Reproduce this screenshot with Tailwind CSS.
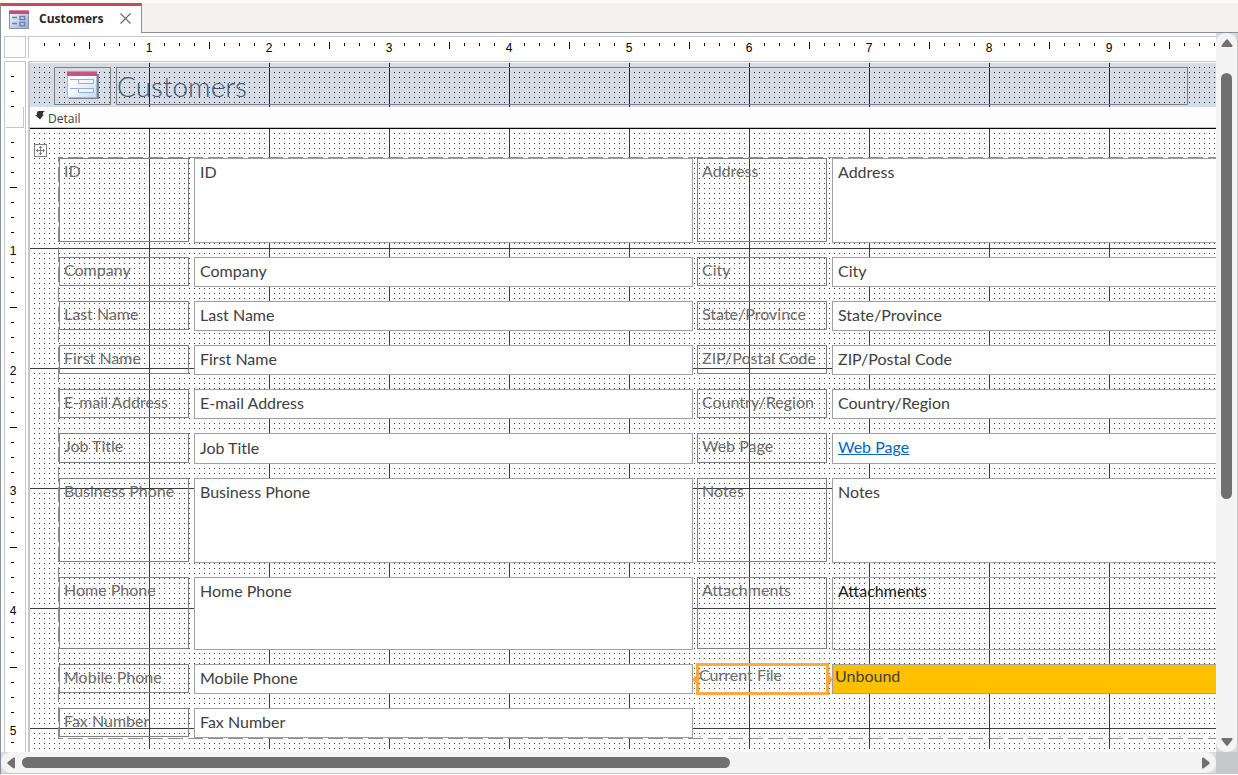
<!DOCTYPE html>
<html lang="en">
<head>
<meta charset="utf-8">
<title>Customers</title>
<script src="https://cdn.jsdelivr.net/npm/@tailwindcss/browser@4"></script>
</head>
<body class="h-screen overflow-hidden bg-[#fafafa] font-['Open_Sans','Noto_Sans',sans-serif] text-[#404040]">
<div class="flex h-full flex-col pt-[3px] pb-px">

  <!-- Document tabs -->
  <header class="flex h-[30px] shrink-0">
    <div class="flex w-[142px] items-center border-t-3 border-r border-l border-t-[#c0504d] border-r-[#8a9099] border-l-[#8a9099] bg-white pl-2">
      <svg class="shrink-0" width="20" height="19" viewBox="0 0 20 19" aria-hidden="true">
        <defs><linearGradient id="tabFill" x1="0" y1="0" x2="1" y2="1"><stop offset="0" stop-color="#fff"/><stop offset="1" stop-color="#8fa9d6"/></linearGradient></defs>
        <rect x=".5" y=".5" width="19" height="18" fill="url(#tabFill)" stroke="#8494b5"/>
        <path d="M0 0h20v4H0z" fill="#bd5277"/><path d="M0 0h20v1H0z" fill="#d48aa5"/>
        <path d="M3 7.500h5M3 13.500h5" stroke="#6c80a8" stroke-width="1.500"/>
        <path d="M11 6.500h4.500v3H11zM11 12.500h4.500v3H11z" fill="#dce7f8" stroke="#6c80a8" stroke-width="1.500"/>
      </svg>
      <span class="ml-2.5 pb-0.5 text-xs font-bold text-[#262626]">Customers</span>
      <button class="ml-4 flex size-3 items-center justify-center" aria-label="Close Customers">
        <svg class="mb-0.5" width="11" height="11" viewBox="0 0 11 11" fill="none" stroke="#666" stroke-width="1.100"><path d="M.5.5l10 10M10.500.5l-10 10"/></svg>
      </button>
    </div>
    <div class="flex-1 border-b border-[#8a9099] bg-[#f3f2f1]"></div>
  </header>

  <main class="grid min-h-0 flex-1 grid-cols-[28px_minmax(0,1fr)_22px] grid-rows-[28px_minmax(0,1fr)_22px] border-l border-[#8a9099] bg-white">

    <!-- Corner selector -->
    <div class="py-[3px] pl-[3px]"><button class="block h-[22px] w-[22px] border border-[#c6c6c6] bg-[#fdfdfd]" aria-label="Select form"></button></div>

    <!-- Horizontal ruler -->
    <div class="relative -ml-px mt-[3px] h-[22px] overflow-hidden border-t border-l border-[#c6c6c6]">
      <svg class="absolute inset-0 h-full w-full" aria-hidden="true">
        <defs><pattern id="hTicks" width="120" height="22" patternUnits="userSpaceOnUse"><path d="M15 6h1v3h-1zM30 6h1v3h-1zM45 6h1v3h-1zM60 5h1v7h-1zM75 6h1v3h-1zM90 6h1v3h-1zM105 6h1v3h-1z"/></pattern></defs>
        <rect width="100%" height="100%" fill="url(#hTicks)"/>
      </svg>
      <div class="relative flex pl-[60px] font-['Liberation_Sans',sans-serif] text-xs leading-[22px] text-black">
        <span class="w-[120px] shrink-0 text-center">1</span><span class="w-[120px] shrink-0 text-center">2</span><span class="w-[120px] shrink-0 text-center">3</span><span class="w-[120px] shrink-0 text-center">4</span><span class="w-[120px] shrink-0 text-center">5</span><span class="w-[120px] shrink-0 text-center">6</span><span class="w-[120px] shrink-0 text-center">7</span><span class="w-[120px] shrink-0 text-center">8</span><span class="w-[120px] shrink-0 text-center">9</span>
      </div>
    </div>

    <!-- Vertical scroll bar -->
    <div class="row-span-2 border-r border-[#c8c8c8] bg-[#dcdcdc]">
      <div class="flex h-full flex-col items-center rounded-[10px] bg-[#f4f4f4] py-[6px]">
        <button aria-label="Scroll up"><svg width="12" height="8" viewBox="0 0 12 8" fill="#707070"><path d="M5 .8Q6-.2 7 .8L11.500 6.500Q11.800 8 10.500 8h-9Q.2 8 .5 6.500z"/></svg></button>
        <div class="flex w-full flex-1 flex-col items-center pt-[26px]"><div class="h-[64%] w-[11px] rounded-full bg-[#707070]"></div></div>
        <button aria-label="Scroll down"><svg width="12" height="8" viewBox="0 0 12 8" fill="#707070"><path d="M5 7.200Q6 8.200 7 7.200L11.500 1.500Q11.800 0 10.500 0h-9Q.2 0 .5 1.500z"/></svg></button>
      </div>
    </div>

    <!-- Vertical ruler -->
    <div class="flex min-h-0 flex-col pr-[3px] pl-[3px]">
      <div class="flex min-h-0 flex-1 flex-col overflow-hidden border-x border-t border-[#c6c6c6]">
        <svg class="h-[45px] w-5 shrink-0" aria-hidden="true"><path d="M6 14h3v1H6zM6 29h3v1H6zM6 44h3v1H6z"/></svg>
        <button class="mx-px h-[21px] shrink-0 border-r border-b border-[#c6c6c6] bg-[#fdfdfd]" aria-label="Select Detail section"></button>
        <div class="relative min-h-0 flex-1">
          <svg class="absolute inset-0 h-full w-full" aria-hidden="true">
            <defs><pattern id="vTicks" y="-1" width="22" height="120" patternUnits="userSpaceOnUse"><path d="M6 15h3v1H6zM6 30h3v1H6zM6 45h3v1H6zM5 60h7v1H5zM6 75h3v1H6zM6 90h3v1H6zM6 105h3v1H6z"/></pattern></defs>
            <rect width="100%" height="100%" fill="url(#vTicks)"/>
          </svg>
          <div class="relative flex h-full flex-col overflow-hidden pt-[63px] pr-1 text-center font-['Liberation_Sans',sans-serif] text-xs leading-[120px] text-black">
            <span class="h-[120px] shrink-0">1</span><span class="h-[120px] shrink-0">2</span><span class="h-[120px] shrink-0">3</span><span class="h-[120px] shrink-0">4</span><span class="h-[120px] shrink-0">5</span>
          </div>
        </div>
      </div>
    </div>

    <!-- Design surface -->
    <div class="-ml-px flex min-h-0 flex-col overflow-hidden border-t border-l-2 border-[#c6c6c6] pt-px pb-[3px]">
      <svg class="absolute size-0" aria-hidden="true">
        <defs>
          <pattern id="dots" width="5" height="5" patternUnits="userSpaceOnUse"><path d="M4 4h1v1H4z" fill="#3c3c3c"/></pattern>
          <pattern id="inches" width="120" height="120" patternUnits="userSpaceOnUse"><path d="M119 0h1v120h-1zM0 119h119v1H0z" fill="#3c3c3c"/></pattern>
          <pattern id="headDots" width="5" height="5" patternUnits="userSpaceOnUse"><path d="M4 4h1v1H4z" fill="#18202e"/></pattern>
          <pattern id="headInches" width="120" height="120" patternUnits="userSpaceOnUse"><path d="M119 0h1v120h-1z" fill="#18202e"/></pattern>
        </defs>
      </svg>

      <!-- Form Header section -->
      <section class="relative h-[44px] shrink-0 bg-[#d6dce5]">
        <svg class="absolute inset-0 h-full w-full" aria-hidden="true"><rect width="100%" height="100%" fill="url(#headDots)"/><rect width="100%" height="100%" fill="url(#headInches)"/></svg>
        <div class="relative flex gap-[5px] pt-1 pr-7 pl-6">
          <div class="flex h-[38px] w-[57px] shrink-0 items-center justify-center border border-[#808080]">
            <svg width="32" height="30" viewBox="0 0 32 30" aria-hidden="true">
              <defs><linearGradient id="formFill" x1="0" y1="0" x2="1" y2="1"><stop offset=".3" stop-color="#fff"/><stop offset="1" stop-color="#cddaee"/></linearGradient></defs>
              <path d="M2 3h30v25H2z" fill="#7d8798"/>
              <path d="M.5.5h29v26H.5z" fill="url(#formFill)" stroke="#a9b6cb"/>
              <path d="M0 0h30v5H0z" fill="#c4557c"/><path d="M0 0h30v1H0z" fill="#d98aa6"/>
              <path d="M3 8.500h8M3 17.500h8" stroke="#8cb0df"/>
              <path d="M11.500 8.500h15v4h-15zM11.500 17.500h15v4h-15z" fill="#f2f7fe" stroke="#8cb0df"/>
            </svg>
          </div>
          <h1 class="h-[38px] flex-1 border border-[#808080] font-['Lato',sans-serif] text-[28px] leading-[36px] font-light text-[#44546a]">Customers</h1>
        </div>
      </section>

      <!-- Detail section bar -->
      <div class="flex h-[22px] shrink-0 items-center border-b border-black bg-[#fdfdfd] pl-[5px] text-xs shadow-[inset_0_-1px_#c6c6c6]">
        <svg class="mb-1" width="10" height="9" viewBox="0 0 10 9" aria-hidden="true"><path d="M3 0h7Q7.500 1 7.500 3.500H9L5 8.500 0 4h2Q1.500 1.500 3 0z" fill="#333"/></svg>
        <h2 class="ml-[3px] pt-0.5">Detail</h2>
      </div>

      <section class="relative min-h-0 flex-1 overflow-hidden bg-white">
        <svg class="absolute inset-0 h-full w-full" aria-hidden="true"><rect width="100%" height="100%" fill="url(#dots)"/><rect width="100%" height="100%" fill="url(#inches)"/></svg>

        <button class="absolute top-[15px] left-1 size-[13px] border border-[#808080] bg-white" aria-label="Move layout">
          <svg width="11" height="11" viewBox="0 0 11 11" fill="#808080"><path d="M5 1h1v4h4v1H6v4H5V6H1V5h4zM4 2h3v1H4zM4 8h3v1H4zM2 4h1v3H2zM8 4h1v3H8z"/></svg>
        </button>

        <!-- Controls -->
        <div class="relative mt-[29px] ml-[29px] grid grid-cols-[130px_499px_130px_minmax(0,1fr)] grid-rows-[85px_30px_30px_30px_30px_31px_85px_73px_30px_30px] gap-x-[5px] gap-y-[14px] font-['Lato',sans-serif] text-base leading-6 [&>input]:pb-0.5 [&>textarea]:leading-[26px]">
          <!-- Layout outline -->
          <svg class="absolute -top-px -left-px h-[582px] w-full overflow-visible" fill="none" stroke="#8c8c8c" aria-hidden="true">
            <path d="M0 .5h1300M.5 0v582M0 581.500h1300" stroke="#fff"/>
            <path d="M0 .5h1300M.5 0v582M0 581.500h1300" stroke-dasharray="15 5" stroke-dashoffset="10"/>
            <path d="M641 551.500h560M641 579.500h560" stroke="#c8c8c8" stroke-dasharray="2 28"/>
          </svg>

          <label for="id" class="relative mb-px border border-[#808080] pl-1 text-[#6b6b6b]">ID</label>
          <textarea id="id" readonly class="relative resize-none overflow-hidden border border-[#a0a0a0] bg-white pl-[5px]">ID</textarea>
          <label for="address" class="relative -ml-px mr-px mb-px border border-[#808080] pl-1 text-[#6b6b6b]">Address</label>
          <textarea id="address" readonly class="relative -ml-px resize-none overflow-hidden border border-r-0 border-[#a0a0a0] bg-white pl-[5px]">Address</textarea>

          <label for="company" class="relative mb-px border border-[#808080] pl-1 text-[#6b6b6b]">Company</label>
          <input id="company" readonly value="Company" class="relative min-w-0 border border-[#a0a0a0] bg-white pl-[5px]">
          <label for="city" class="relative -ml-px mr-px mb-px border border-[#808080] pl-1 text-[#6b6b6b]">City</label>
          <input id="city" readonly value="City" class="relative -ml-px min-w-0 border border-r-0 border-[#a0a0a0] bg-white pl-[5px]">

          <label for="last" class="relative mb-px border border-[#808080] pl-1 text-[#6b6b6b]">Last Name</label>
          <input id="last" readonly value="Last Name" class="relative min-w-0 border border-[#a0a0a0] bg-white pl-[5px]">
          <label for="state" class="relative -ml-px mr-px mb-px border border-[#808080] pl-1 whitespace-nowrap text-[#6b6b6b]">State/Province</label>
          <input id="state" readonly value="State/Province" class="relative -ml-px min-w-0 border border-r-0 border-[#a0a0a0] bg-white pl-[5px]">

          <label for="first" class="relative mb-px border border-[#808080] pl-1 text-[#6b6b6b]">First Name</label>
          <input id="first" readonly value="First Name" class="relative min-w-0 border border-[#a0a0a0] bg-white pl-[5px]">
          <label for="zip" class="relative -ml-px mr-px mb-px border border-[#808080] pl-1 whitespace-nowrap text-[#6b6b6b]">ZIP/Postal Code</label>
          <input id="zip" readonly value="ZIP/Postal Code" class="relative -ml-px min-w-0 border border-r-0 border-[#a0a0a0] bg-white pl-[5px]">

          <label for="email" class="relative mb-px border border-[#808080] pl-1 whitespace-nowrap text-[#6b6b6b]">E-mail Address</label>
          <input id="email" readonly value="E-mail Address" class="relative min-w-0 border border-[#a0a0a0] bg-white pl-[5px]">
          <label for="country" class="relative -ml-px mr-px mb-px border border-[#808080] pl-1 whitespace-nowrap text-[#6b6b6b]">Country/Region</label>
          <input id="country" readonly value="Country/Region" class="relative -ml-px min-w-0 border border-r-0 border-[#a0a0a0] bg-white pl-[5px]">

          <label for="job" class="relative mb-px border border-[#808080] pl-1 text-[#6b6b6b]">Job Title</label>
          <input id="job" readonly value="Job Title" class="relative min-w-0 border border-[#a0a0a0] bg-white pl-[5px]">
          <span class="relative -ml-px mr-px mb-px border border-[#808080] pl-1 text-[#6b6b6b]">Web Page</span>
          <div class="relative -ml-px border border-r-0 border-[#a0a0a0] bg-white pl-[5px] leading-[26px]"><a href="#" class="text-[#0563c1] underline">Web Page</a></div>

          <label for="business" class="relative mb-px border border-[#808080] pl-1 whitespace-nowrap text-[#6b6b6b]">Business Phone</label>
          <textarea id="business" readonly class="relative resize-none overflow-hidden border border-[#a0a0a0] bg-white pl-[5px]">Business Phone</textarea>
          <label for="notes" class="relative -ml-px mr-px mb-px border border-[#808080] pl-1 text-[#6b6b6b]">Notes</label>
          <textarea id="notes" readonly class="relative -ml-px resize-none overflow-hidden border border-r-0 border-[#a0a0a0] bg-white pl-[5px]">Notes</textarea>

          <label for="home" class="relative mb-px border border-[#808080] pl-1 text-[#6b6b6b]">Home Phone</label>
          <textarea id="home" readonly class="relative resize-none overflow-hidden border border-[#a0a0a0] bg-white pl-[5px]">Home Phone</textarea>
          <span class="relative -ml-px mr-px mb-px border border-[#808080] pl-1 text-[#6b6b6b]">Attachments</span>
          <div class="relative -ml-px border border-r-0 border-[#a0a0a0] pl-[5px] leading-[26px] text-[#202020]">Attachments</div>

          <label for="mobile" class="relative mb-px border border-[#808080] pl-1 text-[#6b6b6b]">Mobile Phone</label>
          <input id="mobile" readonly value="Mobile Phone" class="relative min-w-0 border border-[#a0a0a0] bg-white pl-[5px]">
          <label for="file" class="relative z-10 -mx-px -my-px -ml-0.5 border-3 border-[#ffaa40] text-[#6b6b6b] leading-[18px] before:absolute before:top-[10px] before:-left-1.5 before:h-[7px] before:w-[5px] before:rounded-l before:bg-[#ffaa40] after:absolute after:top-[10px] after:-right-1.5 after:h-[7px] after:w-[5px] after:rounded-r after:bg-[#ffaa40]">Current File</label>
          <input id="file" readonly value="Unbound" class="relative -ml-px min-w-0 border border-r-0 border-[#a0a0a0] bg-[#ffc000] pb-1.5! pl-0.5">

          <label for="fax" class="relative mb-px border border-[#808080] pl-1 text-[#6b6b6b]">Fax Number</label>
          <input id="fax" readonly value="Fax Number" class="relative min-w-0 border border-[#a0a0a0] bg-white pl-[5px]">
        </div>
      </section>
    </div>

    <!-- Horizontal scroll bar -->
    <div class="col-span-2 border-b border-[#c8c8c8] bg-[#dcdcdc]">
      <div class="flex h-full items-center rounded-[10px] bg-[#f4f4f4] px-[6px]">
        <button aria-label="Scroll left"><svg width="8" height="12" viewBox="0 0 8 12" fill="#707070"><path d="M.8 5Q-.2 6 .8 7L6.500 11.500Q8 11.800 8 10.500v-9Q8 .2 6.500.5z"/></svg></button>
        <div class="flex-1 pl-[7px]"><div class="h-[11px] w-[60%] rounded-full bg-[#707070]"></div></div>
        <button aria-label="Scroll right"><svg width="8" height="12" viewBox="0 0 8 12" fill="#707070"><path d="M7.200 5Q8.200 6 7.200 7L1.500 11.500Q0 11.800 0 10.500v-9Q0 .2 1.500.5z"/></svg></button>
      </div>
    </div>
    <div class="border-r border-b border-[#c8c8c8] bg-[#c5c7cb]"></div>
  </main>
</div>
</body>
</html>
